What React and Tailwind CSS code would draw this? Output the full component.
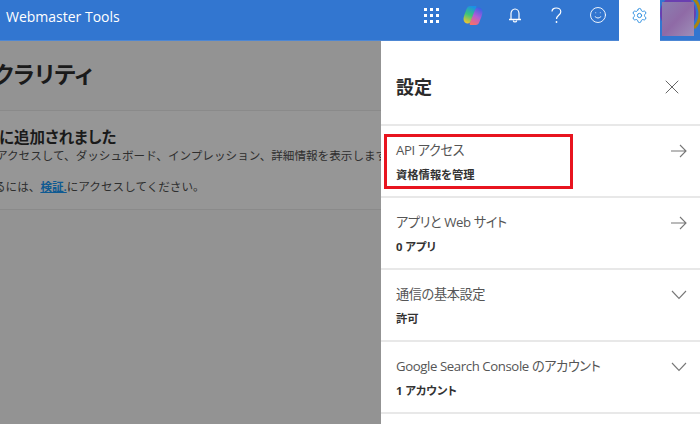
import { X, Smile, Settings } from "lucide-react";

const jp = "font-['Open_Sans','Noto_Sans_CJK_JP',sans-serif]";

const rows = [
  { title: "API アクセス", sub: "資格情報を管理", icon: "arrow", boxed: true },
  { title: "アプリと Web サイト", sub: "0 アプリ", icon: "arrow" },
  { title: "通信の基本設定", sub: "許可", icon: "chevron" },
  { title: "Google Search Console のアカウント", sub: "1 アカウント", icon: "chevron" },
];

function CopilotIcon() {
  return (
    <svg width="20" height="21" viewBox="0 0 20 21">
      <defs>
        <linearGradient id="cpA" x1="0.6" y1="0" x2="0.3" y2="1">
          <stop offset="0" stopColor="#1b8fe6" />
          <stop offset="0.5" stopColor="#3cc47a" />
          <stop offset="1" stopColor="#f4c52e" />
        </linearGradient>
        <linearGradient id="cpB" x1="0.7" y1="0" x2="0.3" y2="1">
          <stop offset="0" stopColor="#3a62e6" />
          <stop offset="0.5" stopColor="#b25cd6" />
          <stop offset="1" stopColor="#f7706a" />
        </linearGradient>
      </defs>
      <path d="M7 1h5.500c.8 0 1.100.7.800 1.400L8 16c-.6 1.500-1.600 2.500-3.200 2.500C2.300 18.500 0.500 16.500 0.500 14c0-2 1-4.500 2-7 1-3 2-6 4.500-6z" fill="url(#cpA)" />
      <path d="M13 20H7.500c-.8 0-1.100-.7-.8-1.400L12 5c.6-1.500 1.600-2.500 3.200-2.500 2.500 0 4.300 2 4.300 4.500 0 2-1 4.500-2 7-1 3-2 6-4.500 6z" fill="url(#cpB)" />
    </svg>
  );
}

function GridIcon() {
  return (
    <div className="grid grid-cols-3 gap-[3px]">
      {Array.from({ length: 9 }).map((_, i) => (
        <div key={i} className="w-[3px] h-[3px] bg-white" />
      ))}
    </div>
  );
}

function BellIcon() {
  return (
    <svg width="14" height="15" viewBox="0 0 14 15" fill="none" stroke="#fff" strokeWidth="1.200">
      <path d="M3 11.500V5.500C3 3 4.700 1 7 1s4 2 4 4.500v6" />
      <path d="M1 11.500h12" strokeWidth="1.500" />
      <path d="M5.200 12.500c.3 1 1 1.500 1.800 1.500s1.500-.5 1.800-1.500" />
    </svg>
  );
}

function HelpIcon() {
  return (
    <svg width="11" height="17" viewBox="0 0 11 17" fill="none" stroke="#fff" strokeWidth="1.200">
      <path d="M1 4.500C1 2.500 2.800 1 5.300 1s4.500 1.500 4.500 3.700c0 3.600-4.300 3.600-4.300 7.300" />
      <circle cx="5.500" cy="15" r="0.900" fill="#fff" stroke="none" />
    </svg>
  );
}

function RightArrow() {
  return (
    <svg width="16" height="14" viewBox="0 0 16 14" fill="none" stroke="#777" strokeWidth="1.100">
      <path d="M0 7h15M9 1l6 6-6 6" />
    </svg>
  );
}

function DownChevron() {
  return (
    <svg width="16" height="10" viewBox="0 0 16 10" fill="none" stroke="#777" strokeWidth="1.100">
      <path d="M1 1l7 7.500L15 1" />
    </svg>
  );
}

// purple badge with the gold arc that peeks out behind the blurred photo
function AvatarRing() {
  return (
    <svg width="40" height="40" viewBox="0 0 40 40" className="absolute left-0 top-0">
      <circle cx="18" cy="13" r="18" fill="#6a3fb0" />
      <path d="M28 -5 A20.500 20.500 0 0 1 34 28" fill="none" stroke="#a88410" strokeWidth="3" />
    </svg>
  );
}

function HeaderButton({ children, className = "" }) {
  return <div className={`flex items-center justify-center pb-[10px] ${className}`}>{children}</div>;
}

export default function App() {
  return (
    <div className={`w-[700px] h-[424px] overflow-hidden bg-white flex flex-col ${jp}`}>
      {/* header */}
      <div className="h-[41px] shrink-0 bg-[#3276d0] flex items-stretch border-b border-[#4d87d4]">
        <div className="flex-1 pl-[6px] flex items-center text-white text-[14px] font-medium pb-[7px]">
          Webmaster Tools
        </div>
        <HeaderButton className="w-[41px]">
          <GridIcon />
        </HeaderButton>
        <HeaderButton className="w-[42px] pb-[6px]">
          <CopilotIcon />
        </HeaderButton>
        <HeaderButton className="w-[42px]">
          <BellIcon />
        </HeaderButton>
        <HeaderButton className="w-[41px]">
          <HelpIcon />
        </HeaderButton>
        <HeaderButton className="w-[42px]">
          <Smile size={18} color="#fff" strokeWidth={1.2} />
        </HeaderButton>
        <HeaderButton className="w-[41px] bg-white h-[41px]">
          <Settings size={17} color="#2f8fe0" strokeWidth={1.4} />
        </HeaderButton>
        <div className="w-[40px] relative overflow-hidden">
          <AvatarRing />
          <div className="absolute left-[2px] top-[2px] w-[32px] h-[34px] bg-gradient-to-br from-[#8a7fb0] via-[#8f6aa6] to-[#9d8fb8]" />
        </div>
      </div>

      <div className="flex-1 flex min-h-0">
        {/* page behind the overlay */}
        <div className="w-[381px] shrink-0 overflow-hidden bg-[#939393] text-[#1a1a1a] whitespace-nowrap">
          <div className="h-[70px] flex items-center ml-[-7px] border-b border-[#8a8a8a] text-[23px] font-bold pb-[3px] [font-feature-settings:'palt']">
            クラリティ
          </div>
          <div className="h-[99px] bg-[#969696] border-b border-[#8a8a8a] pt-[16px]">
            <div className="text-[15.5px] font-bold leading-[20px] ml-[-1px] [font-feature-settings:'palt']">に追加されました</div>
            <div className="text-[11.6px] leading-[16px] ml-[-4px] mt-[1px] text-[#2e2e2e]">
              アクセスして、ダッシュボード、インプレッション、詳細情報を表示します
            </div>
            <div className="text-[11.6px] leading-[16px] ml-[-6px] mt-[15px] text-[#2e2e2e]">
              るには、
              <span className="text-[#0f5a92] font-semibold underline">検証.</span>
              にアクセスしてください。
            </div>
          </div>
        </div>

        {/* settings panel */}
        <div className="flex-1 bg-white">
          <div className="h-[85px] flex items-center justify-between pl-[15px] pr-[16px] border-b-2 border-[#e8e8e8]">
            <div className="text-[18px] font-bold text-[#2b2b2b] pt-[9px] [font-feature-settings:'palt']">設定</div>
            <div className="pt-[8px]">
              <X size={24} color="#666" strokeWidth={1} />
            </div>
          </div>
          {rows.map((r) => (
            <div key={r.title} className="relative h-[72px] border-b-2 border-[#e8e8e8] pl-[15px] pr-[13px] flex justify-between">
              <div className="pt-[14px]">
                <div className="text-[13.2px] leading-[20px] tracking-[-0.4px] text-[#555] [font-feature-settings:'palt']">{r.title}</div>
                <div className="text-[11.3px] leading-[16px] font-bold text-[#333] mt-[7px] [font-feature-settings:'palt']">{r.sub}</div>
              </div>
              <div className={r.icon === "arrow" ? "pt-[18px]" : "pt-[20px]"}>
                {r.icon === "arrow" ? <RightArrow /> : <DownChevron />}
              </div>
              {r.boxed && (
                <div className="absolute left-[3px] top-[8px] w-[189px] h-[55px] border-[3px] border-[#e8141f]" />
              )}
            </div>
          ))}
        </div>
      </div>
    </div>
  );
}
